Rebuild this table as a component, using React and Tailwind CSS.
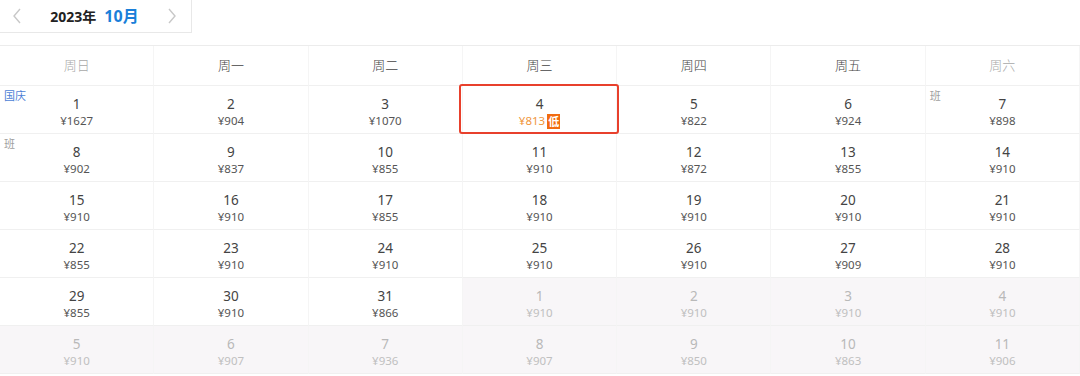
import React from "react";

const weekdays = ["周日", "周一", "周二", "周三", "周四", "周五", "周六"];

// 日历数据: [日期, 价格, 是否下月, 标签, 最低价]
const days = [
  [1, 1627, false, "国庆"], [2, 904], [3, 1070], [4, 813, false, null, true], [5, 822], [6, 924], [7, 898, false, "班"],
  [8, 902, false, "班"], [9, 837], [10, 855], [11, 910], [12, 872], [13, 855], [14, 910],
  [15, 910], [16, 910], [17, 855], [18, 910], [19, 910], [20, 910], [21, 910],
  [22, 855], [23, 910], [24, 910], [25, 910], [26, 910], [27, 909], [28, 910],
  [29, 855], [30, 910], [31, 866], [1, 910, true], [2, 910, true], [3, 910, true], [4, 910, true],
  [5, 910, true], [6, 907, true], [7, 936, true], [8, 907, true], [9, 850, true], [10, 863, true], [11, 906, true],
];

const Chevron = ({ dir }) => (
  <svg width="10" height="16" viewBox="0 0 10 16" fill="none" stroke="#c8c8c8" strokeWidth="1.4">
    {dir === "left" ? <path d="M8 1 L2 8 L8 15" /> : <path d="M2 1 L8 8 L2 15" />}
  </svg>
);

const DayCell = ({ day, price, next, tag, lowest }) => (
  <div className={`relative h-12 flex flex-col items-center pt-[9px] border-b border-[#f0f0f0] border-r border-r-[#f5f5f5] ${next ? "bg-[#f8f6f8]" : "bg-white"}`}>
    {tag && (
      <span className={`absolute left-[4px] top-[2px] text-[11px] leading-[16px] ${tag === "国庆" ? "text-[#4d7fd6]" : "text-[#a0a0a0]"}`}>
        {tag}
      </span>
    )}
    {lowest && (
      <div className="absolute -left-[4px] -right-[3px] -top-[2px] -bottom-[1px] border-2 border-[#e8402c] rounded-[3px] z-10" />
    )}
    <span className={`text-[13.5px] leading-[18px] ${next ? "text-[#b9b9b9]" : "text-[#444]"}`}>{day}</span>
    <span className={`flex items-center gap-[2px] text-[11.5px] leading-[16px] ${lowest ? "text-[#f0963c]" : next ? "text-[#c0c0c0]" : "text-[#555]"}`}>
      ¥{price}
      {lowest && (
        <span className="bg-[#f26b0f] text-white text-[11px] leading-[15px] px-[1px] font-bold">低</span>
      )}
    </span>
  </div>
);

export default function App() {
  return (
    <div className="w-[1080px] h-[376px] bg-white overflow-hidden" style={{ fontFamily: '"Noto Sans", "Noto Sans CJK SC", sans-serif' }}>
      {/* 月份切换 */}
      <div className="w-[192px] h-[33px] border-r border-b border-[#e8e8e8] flex items-center pl-[12px] pr-[14px]">
        <Chevron dir="left" />
        <div className="flex-1 flex items-baseline justify-center gap-[8px]">
          <span className="text-[14px] font-bold text-[#222]">2023年</span>
          <span className="text-[16px] font-bold text-[#1a7fd9]">10月</span>
        </div>
        <Chevron dir="right" />
      </div>

      {/* 日历表 */}
      <div className="mt-[12px] border-t border-[#ececec] grid grid-cols-7">
        {weekdays.map((w, i) => (
          <div
            key={w}
            className={`h-10 flex items-center justify-center text-[13px] font-light border-b border-[#f0f0f0] border-r border-r-[#f5f5f5] ${i === 0 || i === 6 ? "text-[#a8a8a8]" : "text-[#444]"}`}
          >
            {w}
          </div>
        ))}
        {days.map(([day, price, next, tag, lowest], i) => (
          <DayCell key={i} day={day} price={price} next={next} tag={tag} lowest={lowest} />
        ))}
      </div>
    </div>
  );
}
